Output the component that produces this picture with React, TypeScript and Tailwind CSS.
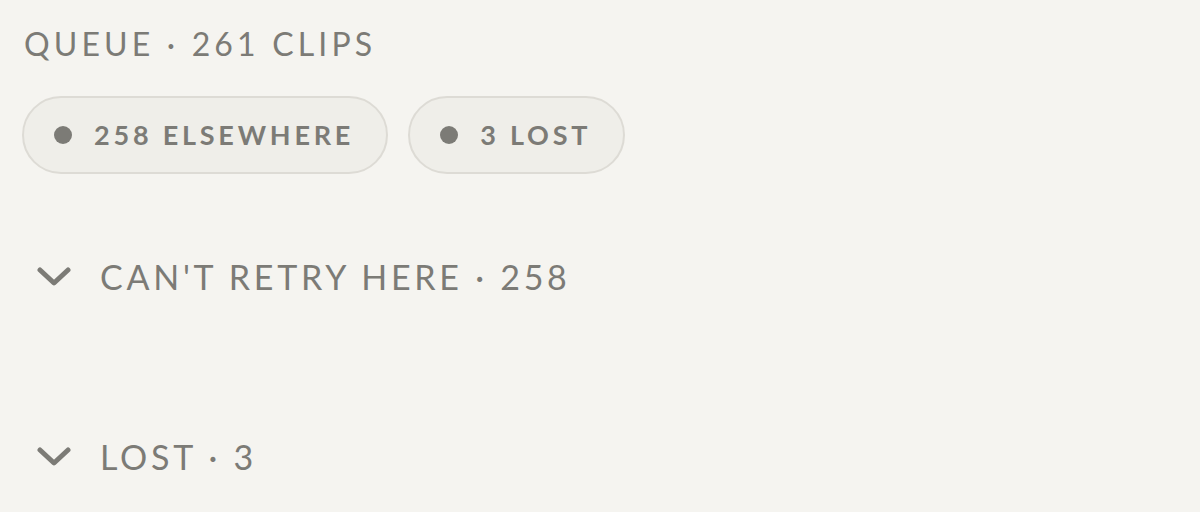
const font = { fontFamily: 'Lato, "Noto Sans", sans-serif' };

function Pill({ label }: { label: string }) {
  return (
    <div className="flex h-[78px] items-center gap-[22px] rounded-full border-2 border-[#dddbd5] bg-[#efeee9] pl-[30px] pr-[32px]">
      <span className="h-[18px] w-[18px] rounded-full bg-[#7c7b76]" />
      <span className="text-[27px] font-bold tracking-[0.14em] text-[#7c7b76]">{label}</span>
    </div>
  );
}

function Chevron() {
  return (
    <svg width="34" height="20" viewBox="0 0 34 20" fill="none" className="shrink-0">
      <path d="M3 3L17 16L31 3" stroke="#7c7b76" strokeWidth="5" strokeLinecap="round" strokeLinejoin="round" />
    </svg>
  );
}

function Section({ label }: { label: string }) {
  return (
    <div className="flex items-center gap-[29px] pl-[37px]">
      <Chevron />
      <span className="text-[34px] tracking-[0.11em] text-[#7c7b76]">{label}</span>
    </div>
  );
}

export default function App() {
  return (
    <div className="h-[512px] w-[1200px] overflow-hidden bg-[#f5f4f0]" style={font}>
      <div className="px-[22px] pt-[24px]">
        <div className="pl-[2px] text-[32px] leading-[40px] tracking-[0.13em] text-[#7c7b76]">QUEUE · 261 CLIPS</div>
        <div className="mt-[32px] flex gap-[20px]">
          <Pill label="258 ELSEWHERE" />
          <Pill label="3 LOST" />
        </div>
      </div>
      <div className="mt-[77px] flex flex-col gap-[129px]">
        <Section label="CAN'T RETRY HERE · 258" />
        <Section label="LOST · 3" />
      </div>
    </div>
  );
}
